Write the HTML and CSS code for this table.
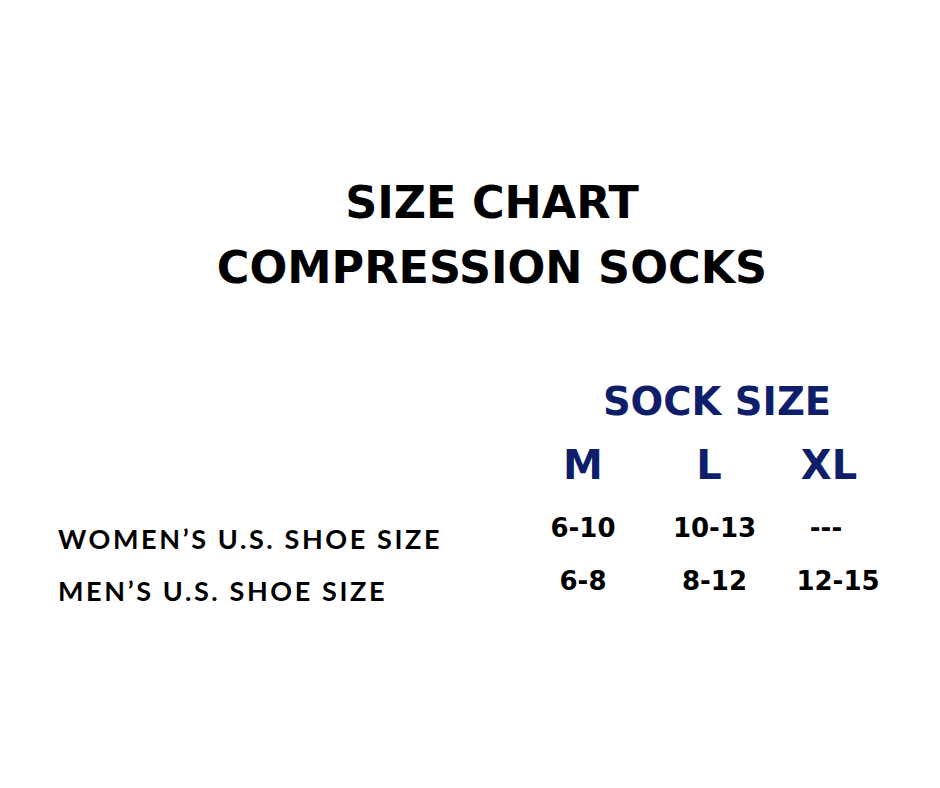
FILE: index.html
```html
<!DOCTYPE html>
<html lang="en">
<head>
<meta charset="utf-8">
<title>Size Chart – Compression Socks</title>
<link rel="stylesheet" href="styles.css">
</head>
<body>
<main class="page">
  <h1 class="title">
    <span class="title-line">SIZE CHART</span>
    <span class="title-line">COMPRESSION SOCKS</span>
  </h1>
  <section class="chart">
    <div class="chart-head">SOCK SIZE</div>
    <div class="size-label first">M</div>
    <div class="size-label">L</div>
    <div class="size-label">XL</div>

    <div class="row-label row-1">WOMEN’S U.S. SHOE SIZE</div>
    <div class="value">6-10</div>
    <div class="value mid">10-13</div>
    <div class="value last-a">---</div>

    <div class="row-label row-2">MEN’S U.S. SHOE SIZE</div>
    <div class="value">6-8</div>
    <div class="value mid">8-12</div>
    <div class="value last-b">12-15</div>
  </section>
</main>
</body>
</html>
```
FILE: styles.css
```css
html, body {
  margin: 0;
  padding: 0;
  background: #ffffff;
}

.page {
  width: 940px;
  height: 788px;
  padding-top: 170px;
  box-sizing: border-box;
}

.title {
  margin: 0;
  display: flex;
  flex-direction: column;
  align-items: center;
  font-family: "DejaVu Sans", sans-serif;
  font-weight: 700;
  font-size: 44.5px;
  line-height: 65px;
  color: #000000;
  padding-left: 44px;
}

.chart {
  display: grid;
  grid-template-columns: 463px 124px 128px 112px;
  grid-template-rows: 62px 71px 53px auto;
  align-items: start;
  padding-left: 58px;
  margin-top: 80px;
}

.chart-head {
  grid-column: 2 / 5;
  text-align: center;
  font-family: "DejaVu Sans", sans-serif;
  font-weight: 700;
  font-size: 38.5px;
  line-height: 44px;
  color: #0e1e6b;
  padding-left: 28px;
}

.size-label {
  text-align: center;
  font-family: "DejaVu Sans", sans-serif;
  font-weight: 700;
  font-size: 40px;
  line-height: 46px;
  color: #0e1e6b;
}

.size-label.first { grid-column: 2; }

.row-label {
  grid-column: 1;
  font-family: "Lato", sans-serif;
  font-weight: 700;
  font-size: 27px;
  line-height: 32px;
  letter-spacing: 2.6px;
  color: #000000;
  white-space: nowrap;
}

.row-1 { padding-top: 10px; }
.row-2 { padding-top: 9px; }

.value {
  text-align: center;
  font-family: "DejaVu Sans", sans-serif;
  font-weight: 700;
  font-size: 26px;
  line-height: 30px;
  color: #000000;
}

.value.mid { padding-left: 11px; }
.value.last-a { padding-right: 6px; }
.value.last-b { padding-left: 18px; }
```
